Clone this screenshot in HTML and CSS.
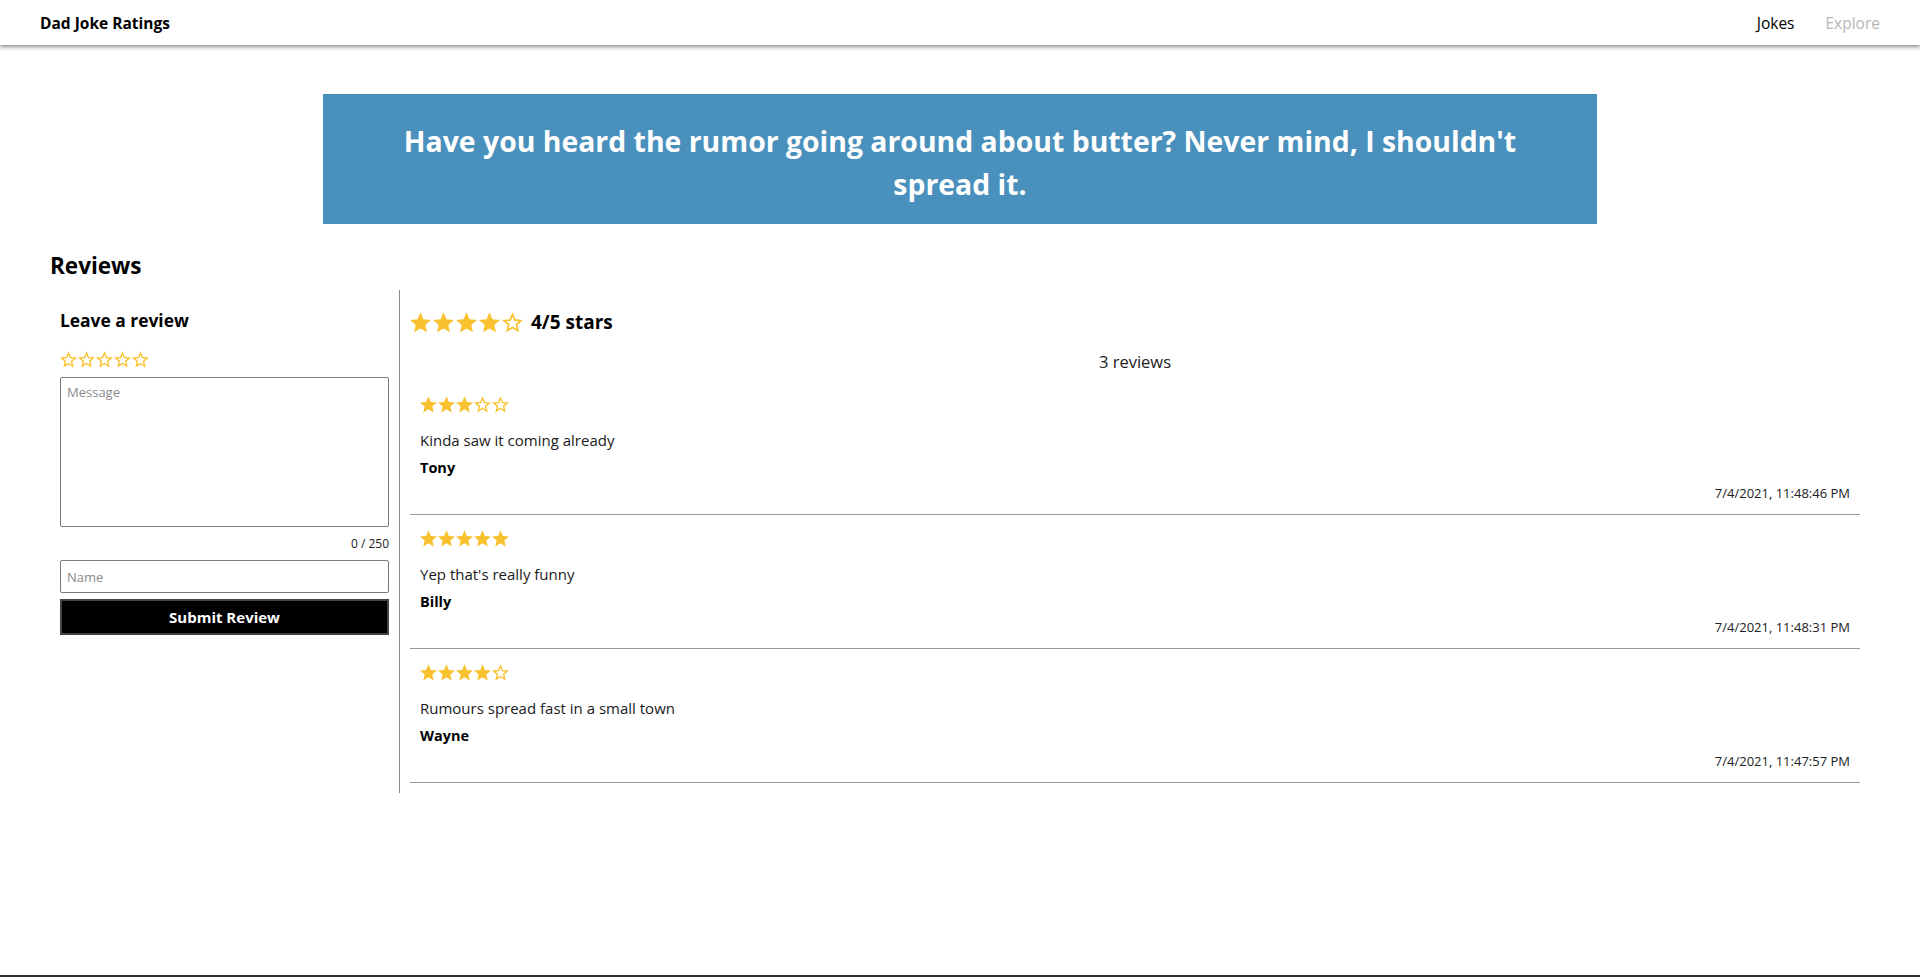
FILE: index.html
```html
<!DOCTYPE html>
<html lang="en">
<head>
<meta charset="utf-8">
<title>Dad Joke Ratings</title>
<link rel="stylesheet" href="styles.css">
</head>
<body>
<svg class="defs" width="0" height="0" aria-hidden="true">
  <defs>
    <symbol id="star-full" viewBox="2 2 20 19.3">
      <path d="M12 17.27L18.18 21l-1.64-7.03L22 9.24l-7.19-.61L12 2 9.19 8.63 2 9.24l5.46 4.730L5.82 21z"/>
    </symbol>
    <symbol id="star-empty" viewBox="2 2 20 19.3">
      <path d="M22 9.24l-7.19-.62L12 2 9.19 8.63 2 9.24l5.46 4.73L5.82 21 12 17.27 18.18 21l-1.63-7.03L22 9.24zM12 15.4l-3.760 2.27 1-4.28-3.32-2.88 4.38-.38L12 6.1l1.71 4.04 4.38.38-3.32 2.88 1 4.28L12 15.4z"/>
    </symbol>
  </defs>
</svg>

<header class="topbar">
  <div class="brand">Dad Joke Ratings</div>
  <nav class="nav">
    <a class="nav-link active" href="#">Jokes</a>
    <a class="nav-link muted" href="#">Explore</a>
  </nav>
</header>

<main class="page">
  <section class="joke">
    <h1 class="joke-text">Have you heard the rumor going around about butter? Never mind, I shouldn't spread it.</h1>
  </section>

  <section class="reviews">
    <h2 class="reviews-title">Reviews</h2>
    <div class="reviews-body">
      <aside class="form-col">
        <h3 class="form-title">Leave a review</h3>
        <div class="stars stars-sm">
          <svg class="star"><use href="#star-empty"/></svg>
          <svg class="star"><use href="#star-empty"/></svg>
          <svg class="star"><use href="#star-empty"/></svg>
          <svg class="star"><use href="#star-empty"/></svg>
          <svg class="star"><use href="#star-empty"/></svg>
        </div>
        <textarea class="field message" placeholder="Message"></textarea>
        <div class="counter">0 / 250</div>
        <input class="field name" type="text" placeholder="Name">
        <button class="submit" type="button">Submit Review</button>
      </aside>

      <div class="list-col">
        <div class="summary">
          <div class="stars stars-lg">
            <svg class="star"><use href="#star-full"/></svg>
            <svg class="star"><use href="#star-full"/></svg>
            <svg class="star"><use href="#star-full"/></svg>
            <svg class="star"><use href="#star-full"/></svg>
            <svg class="star"><use href="#star-empty"/></svg>
          </div>
          <span class="summary-text">4/5 stars</span>
        </div>
        <div class="count">3 reviews</div>

        <article class="review">
          <div class="stars stars-sm">
            <svg class="star"><use href="#star-full"/></svg>
            <svg class="star"><use href="#star-full"/></svg>
            <svg class="star"><use href="#star-full"/></svg>
            <svg class="star"><use href="#star-empty"/></svg>
            <svg class="star"><use href="#star-empty"/></svg>
          </div>
          <p class="review-text">Kinda saw it coming already</p>
          <p class="review-author">Tony</p>
          <p class="review-date">7/4/2021, 11:48:46 PM</p>
        </article>

        <article class="review">
          <div class="stars stars-sm">
            <svg class="star"><use href="#star-full"/></svg>
            <svg class="star"><use href="#star-full"/></svg>
            <svg class="star"><use href="#star-full"/></svg>
            <svg class="star"><use href="#star-full"/></svg>
            <svg class="star"><use href="#star-full"/></svg>
          </div>
          <p class="review-text">Yep that's really funny</p>
          <p class="review-author">Billy</p>
          <p class="review-date">7/4/2021, 11:48:31 PM</p>
        </article>

        <article class="review">
          <div class="stars stars-sm">
            <svg class="star"><use href="#star-full"/></svg>
            <svg class="star"><use href="#star-full"/></svg>
            <svg class="star"><use href="#star-full"/></svg>
            <svg class="star"><use href="#star-full"/></svg>
            <svg class="star"><use href="#star-empty"/></svg>
          </div>
          <p class="review-text">Rumours spread fast in a small town</p>
          <p class="review-author">Wayne</p>
          <p class="review-date">7/4/2021, 11:47:57 PM</p>
        </article>
      </div>
    </div>
  </section>
</main>

<div class="taskbar"></div>
</body>
</html>
```

FILE: styles.css
```css
* {
  box-sizing: border-box;
}

html, body {
  margin: 0;
  padding: 0;
  background: #ffffff;
}

body {
  font-family: "Open Sans", "Noto Sans", "Liberation Sans", sans-serif;
  color: #000;
}

.defs {
  position: absolute;
  width: 0;
  height: 0;
  overflow: hidden;
}

/* Top bar */
.topbar {
  height: 45px;
  display: flex;
  align-items: center;
  justify-content: space-between;
  padding: 0 40px;
  background: #fff;
  box-shadow: 0 2px 4px rgba(0, 0, 0, 0.45);
  position: relative;
  z-index: 1;
}

.brand {
  font-size: 15.5px;
  font-weight: 700;
}

.nav {
  display: flex;
  gap: 31px;
}

.nav-link {
  font-size: 15.5px;
  text-decoration: none;
}

.nav-link.active {
  color: #000;
}

.nav-link.muted {
  color: #b5b5b5;
}

/* Joke banner */
.page {
  padding-top: 49px;
}

.joke {
  width: 1274px;
  margin: 0 auto;
  background: #4a90bd;
  padding: 26px 40px 18px;
  min-height: 130px;
  display: flex;
  align-items: center;
  justify-content: center;
}

.joke-text {
  margin: 0;
  color: #fff;
  font-size: 28.4px;
  font-weight: 700;
  line-height: 43px;
  text-align: center;
}

/* Reviews */
.reviews {
  padding: 0 50px 20px;
}

.reviews-title {
  margin: 26px 0 8px;
  font-size: 22.5px;
  line-height: 32px;
  font-weight: 700;
}

.reviews-body {
  display: flex;
  align-items: stretch;
}

.form-col {
  width: 350px;
  flex: none;
  padding: 0 10px;
  border-right: 1px solid #8a8a8a;
  display: flex;
  flex-direction: column;
}

.form-title {
  margin: 18px 0 0;
  font-size: 17.4px;
  line-height: 25px;
  font-weight: 700;
}

.stars {
  display: flex;
  align-items: center;
}

.star {
  fill: #f9c12e;
  flex: none;
}

.stars-sm {
  gap: 1px;
  height: 18px;
}

.stars-sm .star {
  width: 17px;
  height: 17px;
}

.stars-lg {
  gap: 2px;
  height: 22px;
}

.stars-lg .star {
  width: 21px;
  height: 21px;
}

.form-col .stars-sm {
  margin-top: 17px;
}

.field {
  display: block;
  width: 100%;
  border: 1px solid #7a7a7a;
  border-radius: 2px;
  font-family: inherit;
  font-size: 13px;
  color: #222;
  padding: 5px 6px;
  background: #fff;
}

.field::placeholder {
  color: #8a8a8a;
}

.message {
  margin-top: 9px;
  height: 150px;
  resize: none;
}

.counter {
  margin-top: 9px;
  font-size: 12px;
  line-height: 16px;
  text-align: right;
  color: #222;
}

.name {
  margin-top: 8px;
  height: 33px;
  padding: 4px 6px;
}

.submit {
  margin-top: 6px;
  height: 36px;
  width: 100%;
  background: #000;
  color: #fff;
  border: 2px solid #444;
  font-family: inherit;
  font-size: 15px;
  font-weight: 700;
  cursor: pointer;
}

.list-col {
  flex: 1;
  min-width: 0;
  padding: 0 10px 10px;
}

.summary {
  margin-top: 21px;
  display: flex;
  align-items: center;
  gap: 8px;
  height: 22px;
}

.summary-text {
  font-size: 19px;
  font-weight: 700;
  line-height: 22px;
}

.count {
  margin-top: 17px;
  font-size: 16.5px;
  line-height: 24px;
  text-align: center;
  color: #222;
}

.review {
  padding: 14px 10px 12px;
  border-bottom: 1px solid #9a9a9a;
}

.count + .review {
  margin-top: 7px;
}

.review p {
  margin: 0;
}

.review-text {
  margin-top: 17px !important;
  font-size: 15px;
  line-height: 20px;
  color: #1a1a1a;
}

.review-author {
  margin-top: 8px !important;
  font-size: 14.5px;
  line-height: 20px;
  font-weight: 700;
}

.review-date {
  margin-top: 6px !important;
  font-size: 13px;
  line-height: 18px;
  text-align: right;
  color: #222;
}

.taskbar {
  position: fixed;
  left: 0;
  right: 0;
  bottom: 0;
  height: 2px;
  background: #2e2e2e;
}
```
